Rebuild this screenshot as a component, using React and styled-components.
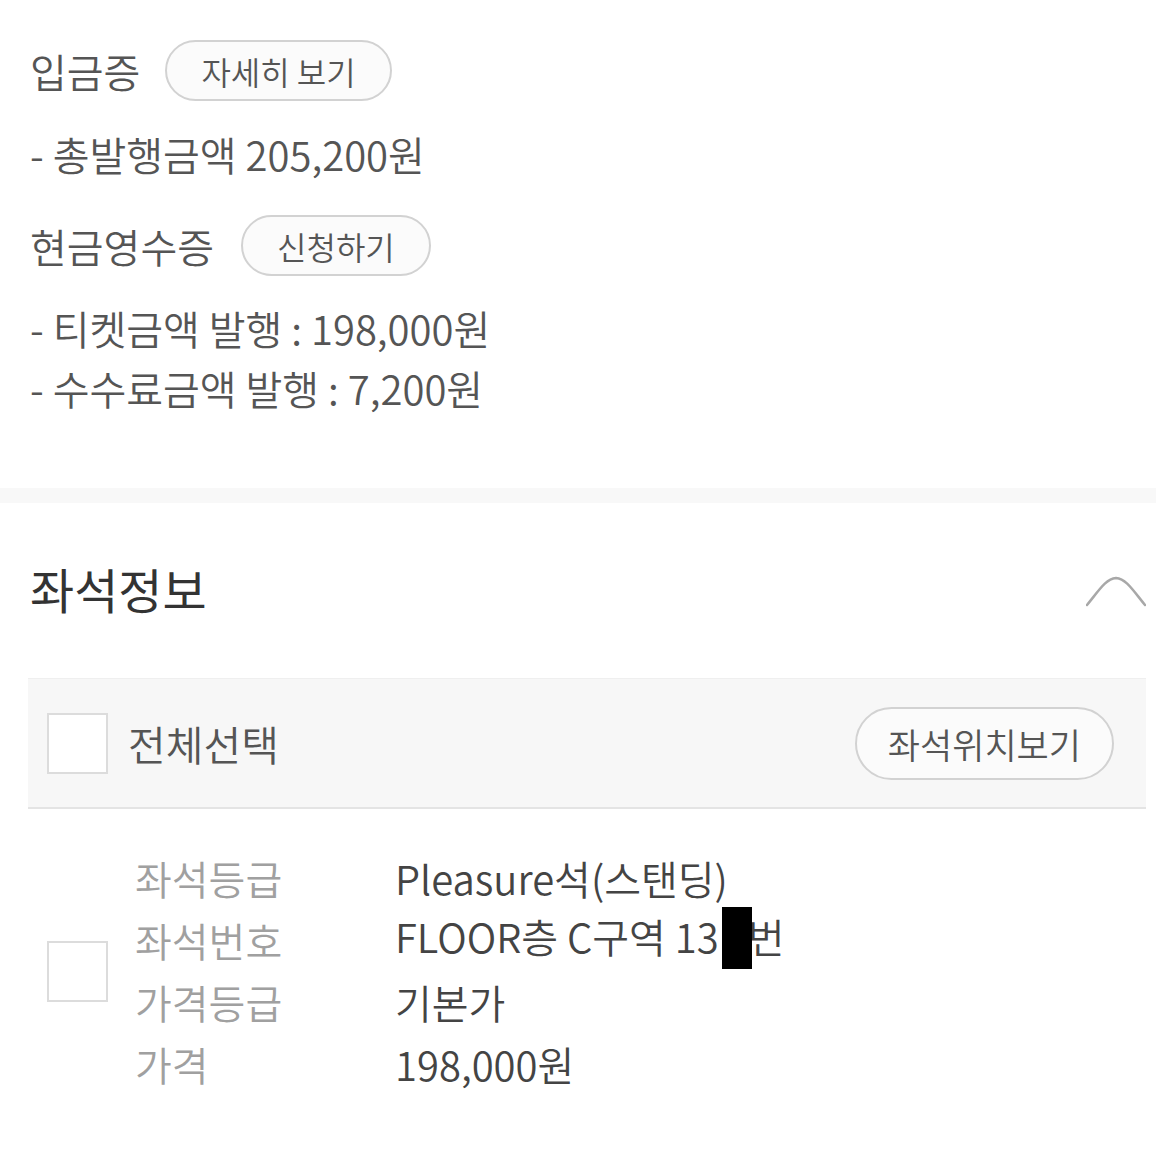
import styled, { createGlobalStyle } from "styled-components";

/* ────── GLOBAL ────── */
const GlobalStyle = createGlobalStyle`
  html, body {
    margin: 0;
    padding: 0;
    background: #fff;
  }
  body {
    font-family: "Noto Sans CJK KR", "Noto Sans", sans-serif;
    font-weight: 350;
    color: #555;
  }
`;

/* ────── LAYOUT ────── */
const Page = styled.div`
  width: 1156px;
  padding: 40px 10px 60px 28px;
  box-sizing: border-box;
`;

const Receipt = styled.section`
  padding-left: 2px;
`;

const LabelRow = styled.div`
  display: flex;
  align-items: center;
  gap: ${(p) => p.$gap || 25}px;
  height: 61px;
  margin-top: ${(p) => p.$top || 0}px;
`;

const Label = styled.span`
  font-size: 40px;
  color: #555;
  line-height: 1;
`;

const PillButton = styled.button`
  font-family: inherit;
  font-weight: inherit;
  height: ${(p) => p.$h || 61}px;
  padding: 0 ${(p) => p.$px || 34}px;
  border: 2px solid #d2d2d2;
  border-radius: 40px;
  background: #fbfbfb;
  color: #555;
  font-size: ${(p) => p.$fs || 32}px;
  line-height: 1;
  cursor: pointer;
`;

const Line = styled.div`
  font-size: 40px;
  line-height: 60px;
  color: #555;
  margin-top: ${(p) => p.$top || 0}px;
`;

const Band = styled.div`
  height: 15px;
  margin: 70px -10px 0 -28px;
  background: #f8f8f8;
`;

/* ────── SEAT INFO ────── */
const TitleRow = styled.div`
  display: flex;
  align-items: center;
  justify-content: space-between;
  height: 60px;
  margin-top: 55px;
  padding-left: 2px;

  svg {
    margin-top: 8px;
  }
`;

const Title = styled.h2`
  margin: 0;
  font-size: 48px;
  font-weight: 400;
  color: #333;
`;

const Chevron = () => (
  <svg width="60" height="34" viewBox="0 0 60 34" fill="none">
    <path
      d="M1 30 C 14 14, 20 4, 30 3 C 40 4, 46 14, 59 30"
      stroke="#a8a8a8"
      strokeWidth="2.5"
      strokeLinecap="round"
    />
  </svg>
);

const SelectBar = styled.div`
  display: flex;
  align-items: center;
  justify-content: space-between;
  height: 128px;
  margin-top: 60px;
  padding: 0 32px 0 19px;
  background: #f7f7f7;
  border-top: 1px solid #efefef;
  border-bottom: 2px solid #e4e4e4;
`;

const SelectAll = styled.label`
  display: flex;
  align-items: center;
  gap: 20px;
  font-size: 41px;
  color: #555;
`;

const Box = styled.span`
  display: block;
  width: 57px;
  height: 57px;
  border: 2px solid #dcdcdc;
  background: #fff;
  flex-shrink: 0;
`;

const SeatRow = styled.div`
  display: flex;
  align-items: center;
  padding: 38px 0 0 19px;
`;

const Details = styled.dl`
  display: grid;
  grid-template-columns: 260px auto;
  grid-auto-rows: 62px;
  align-items: center;
  margin: 0 0 0 27px;
`;

const Term = styled.dt`
  font-size: 40px;
  color: #a0a0a0;
`;

const Desc = styled.dd`
  margin: 0;
  font-size: 40px;
  color: #444;
`;

const Redact = styled.span`
  display: inline-block;
  width: 30px;
  height: 62px;
  background: #000;
  vertical-align: middle;
  margin: 0 -4px 0 3px;
  position: relative;
  top: -4px;
`;

export default function App() {
  return (
    <Page>
      <GlobalStyle />
      <Receipt>
        <LabelRow>
          <Label>입금증</Label>
          <PillButton>자세히 보기</PillButton>
        </LabelRow>
        <Line $top={23}>- 총발행금액 205,200원</Line>
        <LabelRow $top={31} $gap={27}>
          <Label>현금영수증</Label>
          <PillButton>신청하기</PillButton>
        </LabelRow>
        <Line $top={22}>- 티켓금액 발행 : 198,000원</Line>
        <Line>- 수수료금액 발행 : 7,200원</Line>
      </Receipt>

      <Band />

      <TitleRow>
        <Title>좌석정보</Title>
        <Chevron />
      </TitleRow>

      <SelectBar>
        <SelectAll>
          <Box />
          전체선택
        </SelectAll>
        <PillButton $h={73} $px={31} $fs={35}>
          좌석위치보기
        </PillButton>
      </SelectBar>

      <SeatRow>
        <Box />
        <Details>
          <Term>좌석등급</Term>
          <Desc>Pleasure석(스탠딩)</Desc>
          <Term>좌석번호</Term>
          <Desc>
            FLOOR층 C구역 13<Redact />번
          </Desc>
          <Term>가격등급</Term>
          <Desc>기본가</Desc>
          <Term>가격</Term>
          <Desc>198,000원</Desc>
        </Details>
      </SeatRow>
    </Page>
  );
}
